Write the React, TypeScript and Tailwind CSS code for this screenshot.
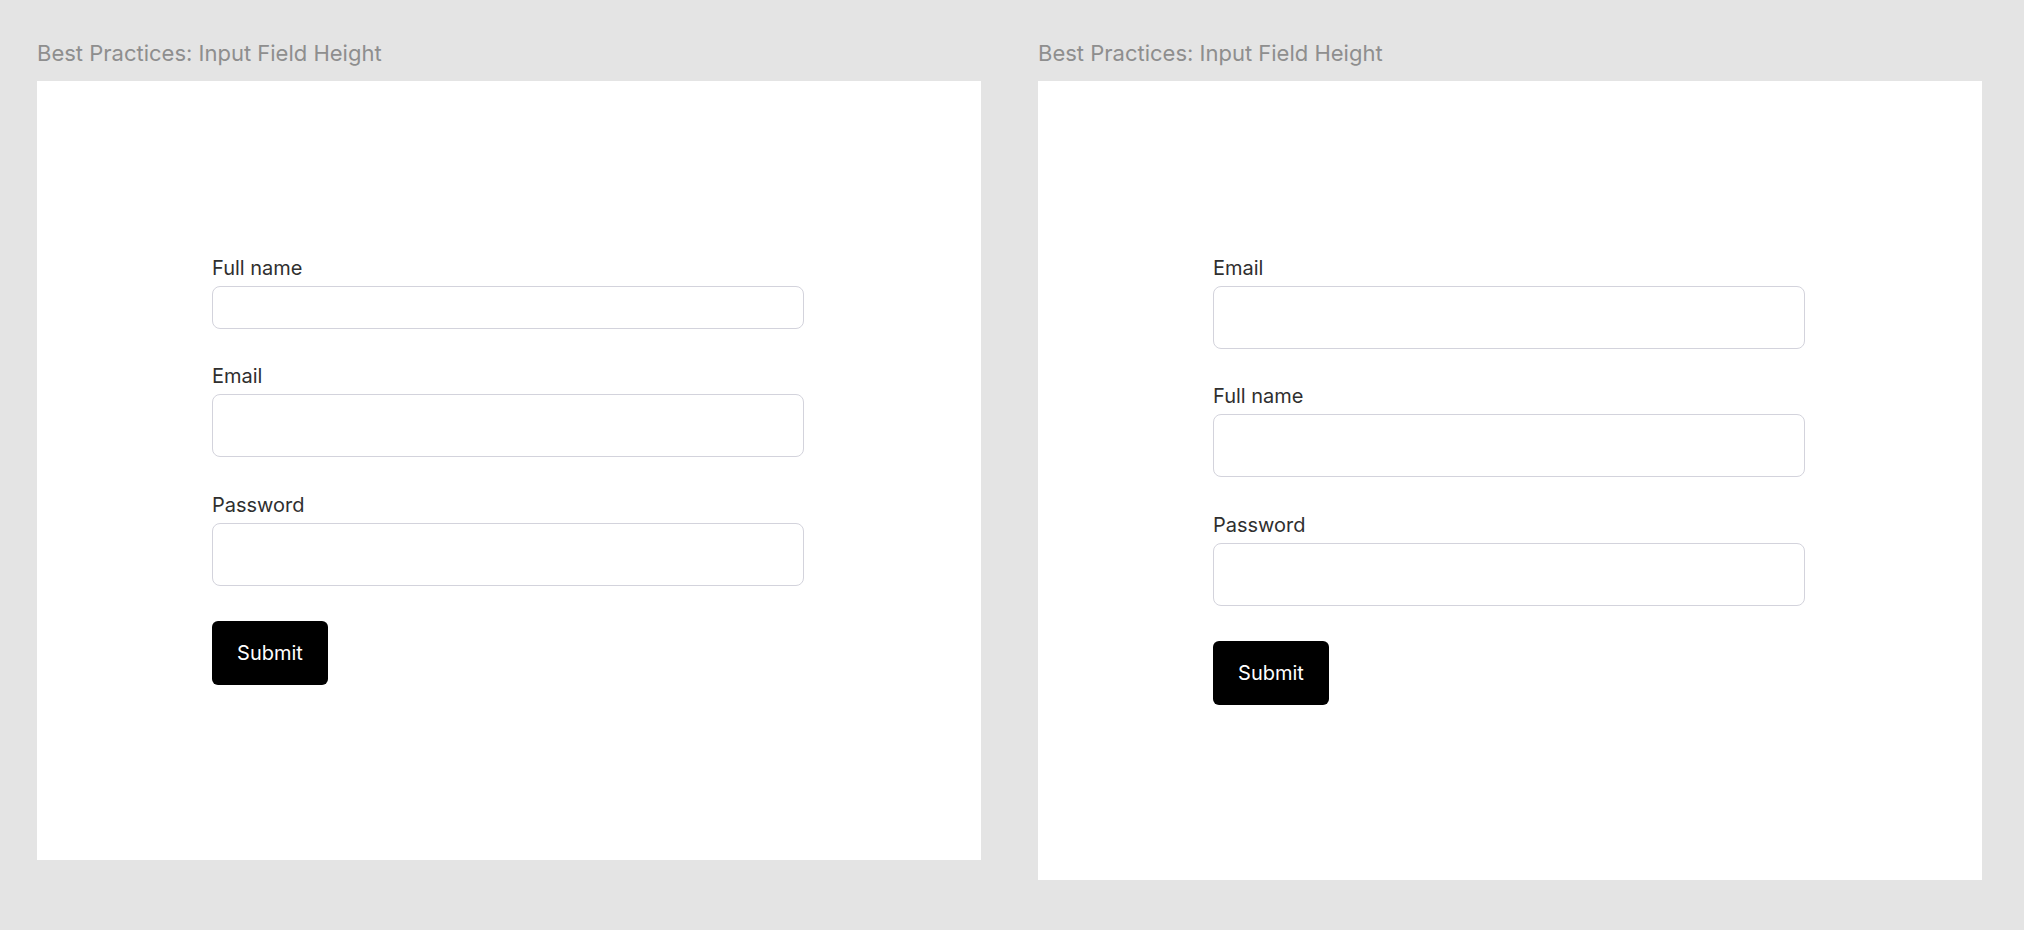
import React from "react";

type Field = { label: string; h: string };

function Form({ fields }: { fields: Field[] }) {
  return (
    <form className="flex w-[592px] flex-col" onSubmit={(e) => e.preventDefault()}>
      <div className="flex flex-col gap-[33.4px]">
        {fields.map((f) => (
          <div key={f.label} className="flex flex-col gap-[4px]">
            <label className="text-[20px] leading-[28px] text-[#2f2f2f]">{f.label}</label>
            <input
              className={`${f.h} w-full rounded-[8px] border border-[#d3d3dc] bg-white outline-none`}
              type="text"
            />
          </div>
        ))}
      </div>
      <div className="mt-[35px]">
        <button
          type="submit"
          className="h-[64px] w-[116px] rounded-[6px] bg-black text-[20px] leading-[28px] text-white"
        >
          Submit
        </button>
      </div>
    </form>
  );
}

function Panel({ fields }: { fields: Field[] }) {
  return (
    <div className="flex w-[944px] flex-col">
      <div className="mb-[12px] text-[22px] leading-[32px] text-[#8e8e8e]">
        Best Practices: Input Field Height
      </div>
      <div className="flex bg-white pb-[175px] pl-[175px] pt-[173px]">
        <Form fields={fields} />
      </div>
    </div>
  );
}

export default function App() {
  return (
    <div
      className="flex min-h-screen items-start gap-[57px] bg-[#e4e4e4] pl-[37px] pt-[37px]"
      style={{ fontFamily: "Inter, 'Noto Sans', sans-serif" }}
    >
      <Panel
        fields={[
          { label: "Full name", h: "h-[43px]" },
          { label: "Email", h: "h-[63px]" },
          { label: "Password", h: "h-[63px]" },
        ]}
      />
      <Panel
        fields={[
          { label: "Email", h: "h-[63px]" },
          { label: "Full name", h: "h-[63px]" },
          { label: "Password", h: "h-[63px]" },
        ]}
      />
    </div>
  );
}
